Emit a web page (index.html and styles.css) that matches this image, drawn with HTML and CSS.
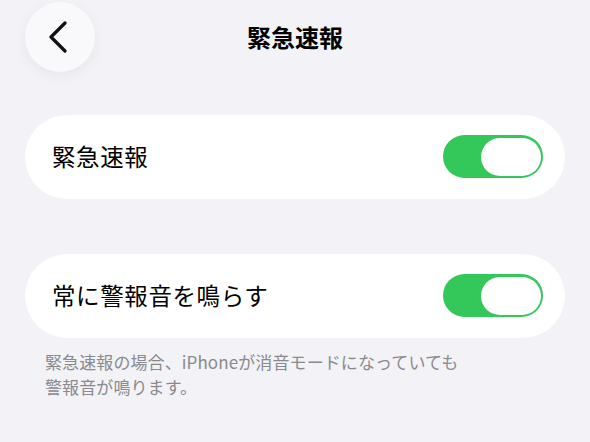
FILE: index.html
```html
<!DOCTYPE html>
<html lang="ja">
<head>
<meta charset="utf-8">
<link rel="stylesheet" href="styles.css">
</head>
<body>
<div class="page">
  <header class="nav">
    <button class="back" aria-label="戻る">
      <svg width="22" height="32" viewBox="0 0 22 32"><path d="M18 2 L4 16 L18 30" fill="none" stroke="#111" stroke-width="3.2" stroke-linecap="round" stroke-linejoin="round"/></svg>
    </button>
    <h1 class="title">緊急速報</h1>
    <span class="spacer"></span>
  </header>
  <section class="card first">
    <span class="label">緊急速報</span>
    <span class="toggle"><span class="knob"></span></span>
  </section>
  <section class="card second">
    <span class="label">常に警報音を鳴らす</span>
    <span class="toggle"><span class="knob"></span></span>
  </section>
  <p class="note">緊急速報の場合、iPhoneが消音モードになっていても<br>警報音が鳴ります。</p>
</div>
</body>
</html>
```
FILE: styles.css
```css
html, body {
  margin: 0;
  padding: 0;
  background: #f2f2f7;
}
body {
  font-family: "Noto Sans CJK JP", "Noto Sans", sans-serif;
  color: #000;
  width: 590px;
  height: 442px;
  overflow: hidden;
}
.page {
  padding: 2px 25px 0 25px;
}
.nav {
  display: grid;
  grid-template-columns: 70px 1fr 70px;
  align-items: center;
  height: 70px;
}
.back {
  width: 70px;
  height: 70px;
  border-radius: 50%;
  border: none;
  background: #f9f9fc;
  box-shadow: 0 4px 14px rgba(0,0,0,0.05);
  display: flex;
  align-items: center;
  justify-content: center;
  padding: 0 4px 0 0;
}
.back svg { display: block; }
.title {
  margin: 0;
  text-align: center;
  font-size: 24px;
  font-weight: 700;
  line-height: 1;
}
.card {
  background: #fff;
  border-radius: 42px;
  height: 84px;
  display: flex;
  align-items: center;
  justify-content: space-between;
  padding: 0 22px 0 27px;
}
.first { margin-top: 43px; }
.second { margin-top: 55px; }
.label {
  font-size: 23.5px;
  line-height: 1;
  letter-spacing: 0.6px;
}
.toggle {
  width: 100px;
  height: 43px;
  border-radius: 22px;
  background: #34c759;
  display: flex;
  align-items: center;
  justify-content: flex-end;
  padding: 0 2px;
  box-sizing: border-box;
  margin-top: -1px;
}
.knob {
  width: 60px;
  height: 38px;
  border-radius: 19px;
  background: #fff;
}
.note {
  margin: 11px 0 0 2px;
  padding-left: 18px;
  font-size: 17px;
  line-height: 25px;
  letter-spacing: 0.1px;
  color: #8a8a8e;
}
```
